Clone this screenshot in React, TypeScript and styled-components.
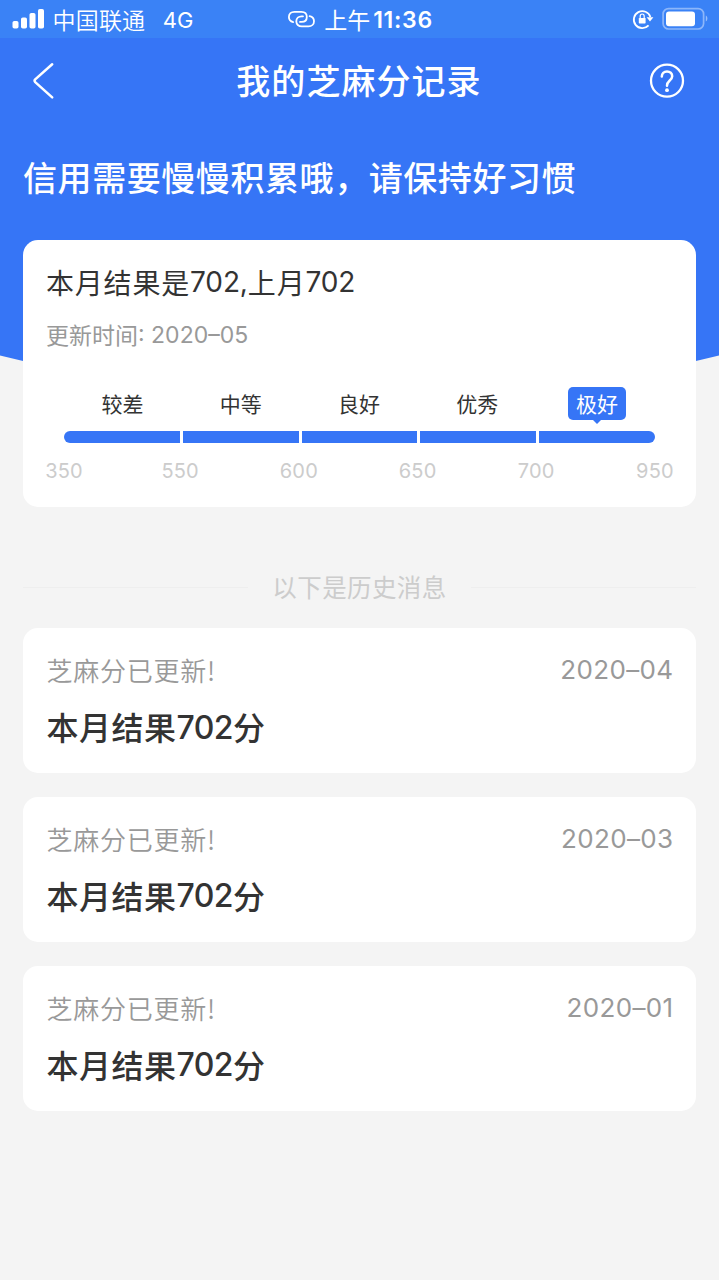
import React from 'react';
import styled, { createGlobalStyle, css } from 'styled-components';

const BLUE = '#3675f6';

const GlobalStyle = createGlobalStyle`
  * { box-sizing: border-box; }
  body {
    margin: 0;
    background: #f4f4f4;
    font-family: 'Noto Sans CJK SC', 'Inter', sans-serif;
    color: #333;
  }
`;

const Page = styled.main`
  width: 719px;
  min-height: 1280px;
  background: #f4f4f4;
  overflow: hidden;
`;

const Hero = styled.header`
  height: 441px;
  background: ${BLUE};
  color: #fff;
  clip-path: polygon(0 0, 100% 0, 100% 355.5px, 50% 100%, 0 355.5px);
`;

const StatusBar = styled.div`
  display: grid;
  grid-template-columns: 1fr auto 1fr;
  align-items: center;
  height: 38px;
  padding: 0 10px 0 12px;
  background: #3a82f6;
`;

const StatusGroup = styled.div<{ $end?: boolean }>`
  display: flex;
  align-items: center;
  justify-content: ${p => (p.$end ? 'flex-end' : 'flex-start')};
  gap: ${p => (p.$end ? 8 : 0)}px;
  height: 38px;
`;

const Text = styled.span<{ $size: number; $track?: number; $weight?: number; $color?: string }>`
  font-size: ${p => p.$size}px;
  letter-spacing: ${p => p.$track ?? 0}px;
  font-weight: ${p => p.$weight ?? 400};
  line-height: 1;
  white-space: pre;
  ${p => p.$color && css`color: ${p.$color};`}
`;

const Num = styled(Text)`
  font-family: 'Inter', 'Noto Sans CJK SC', sans-serif;
`;

const Carrier = styled(Text)`
  margin: 0 17.5px 0 7.5px;
`;

const Network = styled(Num)`
  margin-top: 2px;
`;

const Meridiem = styled(Text)`
  margin: 0 3px 0 8px;
`;

const Clock = styled(Num)`
  margin-top: 2px;
`;

const NavBar = styled.nav`
  display: flex;
  align-items: center;
  justify-content: space-between;
  height: 85px;
  padding: 0 34px 0 32px;
`;

const NavSide = styled.div<{ $end?: boolean }>`
  display: flex;
  justify-content: ${p => (p.$end ? 'flex-end' : 'flex-start')};
  width: 60px;
`;

const Title = styled.h1`
  margin: 0;
  padding: 0 0 1px 1px;
  font-size: 34px;
  font-weight: 500;
  letter-spacing: 1.05px;
  line-height: 1;
`;

const Slogan = styled.p`
  margin: 37px 0 0 23px;
  font-size: 34px;
  font-weight: 500;
  letter-spacing: 0.57px;
  line-height: 34px;
  white-space: nowrap;
`;

const Card = styled.section`
  position: relative;
  margin: 0 23px;
  border-radius: 15px;
  background: #fff;
`;

const ScoreCard = styled(Card)`
  height: 267px;
  margin-top: -201px;
  padding: 28px 23px 0;
`;

const Line = styled.div<{ $top?: number; $lift?: number }>`
  display: flex;
  align-items: center;
  margin-top: ${p => p.$top ?? 0}px;
  & > ${Text}:not(${Num}) {
    padding-bottom: ${p => p.$lift ?? 0}px;
  }
`;

const Scale = styled.div`
  width: 591px;
  margin: 39px 0 0 18px;
`;

const Levels = styled.div`
  display: grid;
  grid-template-columns: repeat(5, 1fr);
  justify-items: center;
`;

const Level = styled.div<{ $active?: boolean }>`
  position: relative;
  display: flex;
  align-items: center;
  justify-content: center;
  width: 58px;
  height: 33px;
  border-radius: 5px;
  margin-left: -1px;
  ${p => p.$active && css`
    margin-left: 2px;
    background: ${BLUE};
    color: #fff;
    &::after {
      content: '';
      position: absolute;
      top: 100%;
      left: 50%;
      border: solid transparent;
      border-width: 4px 4px 0;
      border-top-color: ${BLUE};
      transform: translateX(-50%);
    }
  `}
`;

const Track = styled.div`
  display: grid;
  grid-template-columns: repeat(5, 1fr);
  gap: 3px;
  height: 11.5px;
  margin-top: 11px;
  border-radius: 6px;
  overflow: hidden;
`;

const Segment = styled.div`
  background: ${BLUE};
`;

const Ticks = styled.div`
  display: flex;
  justify-content: space-between;
  margin: 18.5px -20px 0;
`;

const Tick = styled(Num)`
  width: 40px;
  text-align: center;
  &:first-child {
    margin-right: -2.5px;
  }
`;

const Divider = styled.div`
  display: flex;
  align-items: center;
  height: 26px;
  margin: 67px 23px 0;
  gap: 24px;
`;

const Rule = styled.div`
  flex: 1;
  height: 1px;
  background: #eee;
`;

const History = styled.div`
  display: flex;
  flex-direction: column;
  gap: 23.6px;
  margin-top: 28px;
`;

const Record = styled(Card)`
  height: 145.3px;
  padding: 29px 22.5px 0 23.5px;
`;

const RecordHead = styled.div`
  display: flex;
  align-items: center;
  justify-content: space-between;
  height: 26px;
`;

const SignalIcon = () => (
  <svg width="33" height="22" viewBox="0 0 33 22" fill="#fff">
    <rect x="0.5" y="13" width="6" height="7.5" rx="1.8" />
    <rect x="9" y="9.5" width="6" height="11" rx="1.8" />
    <rect x="17.5" y="5" width="6" height="15.5" rx="1.8" />
    <rect x="26" y="1" width="6" height="19.5" rx="1.8" />
  </svg>
);

const LinkIcon = () => (
  <svg width="28" height="18" viewBox="0 0 28 18" fill="none" stroke="#fff" strokeWidth="1.8" strokeLinecap="round">
    <path d="M5.2 12.1C2.4 11.4 0.9 9.4 0.9 7C0.9 3.8 3.2 1.8 6.4 1.8H13.4C16.7 1.8 18.8 3.9 18.8 6.9C18.8 9.9 16.7 11.9 13.6 11.9H12" />
    <path d="M21.6 6.2C24.4 6.9 26 8.7 26 11.2C26 14.3 23.7 16.4 20.5 16.4H13.8C10.5 16.4 8.3 14.3 8.3 11.3C8.3 8.3 10.5 6.3 13.6 6.3H15" />
  </svg>
);

const RotationLockIcon = () => (
  <svg width="22" height="22" viewBox="0 0 22 22" fill="none" stroke="#fff">
    <path d="M16.6 17.4A8.5 8.5 0 1 1 18.4 9" strokeWidth="1.8" />
    <path d="M14.6 9.2H21.4L18 13.6Z" fill="#fff" stroke="none" />
    <rect x="6.8" y="9.9" width="6.8" height="5.6" rx="0.7" fill="#fff" stroke="none" />
    <path d="M8.2 10V8.2A2 2.2 0 0 1 12.2 8.2V10" strokeWidth="1.2" />
  </svg>
);

const BatteryIcon = () => (
  <svg width="47" height="24" viewBox="0 0 47 24" fill="none">
    <rect x="1.1" y="1.6" width="40.5" height="20.4" rx="5.5" stroke="#fff" strokeOpacity="0.42" strokeWidth="1.7" />
    <rect x="4" y="4.4" width="29" height="14.8" rx="3" fill="#fff" />
    <path d="M43.8 8.5C45.9 9.5 45.9 13.5 43.8 14.6Z" fill="#fff" fillOpacity="0.48" />
  </svg>
);

const BackIcon = () => (
  <svg width="24" height="38" viewBox="0 0 24 38" fill="none" stroke="#fff" strokeWidth="2.5" strokeLinecap="round" strokeLinejoin="round">
    <path d="M20.2 2.3L3.2 17.4Q2 18.8 3.2 20.1L20.2 35.4" />
  </svg>
);

const HelpIcon = () => (
  <svg width="36" height="36" viewBox="0 0 36 36" fill="none" stroke="#fff" strokeWidth="2.3">
    <circle cx="18" cy="17.7" r="16" />
    <path d="M12.8 13.6C12.8 10.4 15 8.4 18 8.4C21 8.4 23.2 10.4 23.2 13.2C23.2 15.4 22 16.5 20.5 17.8C18.8 19.3 18 20.3 18 22.8" strokeWidth="2.5" strokeLinecap="round" />
    <circle cx="18" cy="27.2" r="1.9" fill="#fff" stroke="none" />
  </svg>
);

const levels = ['较差', '中等', '良好', '优秀', '极好'];
const ticks = ['350', '550', '600', '650', '700', '950'];
const months = ['2020–04', '2020–03', '2020–01'];

export default function App() {
  return (
    <Page>
      <GlobalStyle />
      <Hero>
        <StatusBar>
          <StatusGroup>
            <SignalIcon />
            <Carrier $size={23} $track={0.2} $weight={350}>中国联通</Carrier>
            <Network $size={22}>4G</Network>
          </StatusGroup>
          <StatusGroup>
            <LinkIcon />
            <Meridiem $size={23}>上午</Meridiem>
            <Clock $size={23} $track={0.7} $weight={600}>11:36</Clock>
          </StatusGroup>
          <StatusGroup $end>
            <RotationLockIcon />
            <BatteryIcon />
          </StatusGroup>
        </StatusBar>
        <NavBar>
          <NavSide><BackIcon /></NavSide>
          <Title>我的芝麻分记录</Title>
          <NavSide $end><HelpIcon /></NavSide>
        </NavBar>
        <Slogan>信用需要慢慢积累哦，请保持好习惯</Slogan>
      </Hero>

      <ScoreCard>
        <Line>
          <Text $size={28} $track={0.8}>本月结果是</Text>
          <Num $size={28} $track={-0.1}>702,</Num>
          <Text $size={28} $track={0.8}>上月</Text>
          <Num $size={28} $track={-0.1}>702</Num>
        </Line>
        <Line $top={27} $lift={2}>
          <Text $size={23} $color="#999">更新时间</Text>
          <Num $size={23} $color="#999">: 2020–05</Num>
        </Line>
        <Scale>
          <Levels>
            {levels.map((name, i) => (
              <Level key={name} $active={i === levels.length - 1}>
                <Text $size={21}>{name}</Text>
              </Level>
            ))}
          </Levels>
          <Track>
            {levels.map(name => <Segment key={name} />)}
          </Track>
          <Ticks>
            {ticks.map(value => <Tick key={value} $size={20} $track={0.2} $color="#ccc">{value}</Tick>)}
          </Ticks>
        </Scale>
      </ScoreCard>

      <Divider>
        <Rule />
        <Text $size={24.5} $track={0.4} $color="#ccc">以下是历史消息</Text>
        <Rule />
      </Divider>

      <History>
        {months.map(month => (
          <Record key={month}>
            <RecordHead>
              <Text $size={26} $track={0.75} $weight={350} $color="#999">芝麻分已更新!</Text>
              <Num $size={26} $track={0.35} $color="#999">{month}</Num>
            </RecordHead>
            <Line $top={27} $lift={3}>
              <Text $size={32} $track={0.5} $weight={500}>本月结果</Text>
              <Num $size={32} $track={-0.6} $weight={500}>702</Num>
              <Text $size={32} $weight={500}>分</Text>
            </Line>
          </Record>
        ))}
      </History>
    </Page>
  );
}
